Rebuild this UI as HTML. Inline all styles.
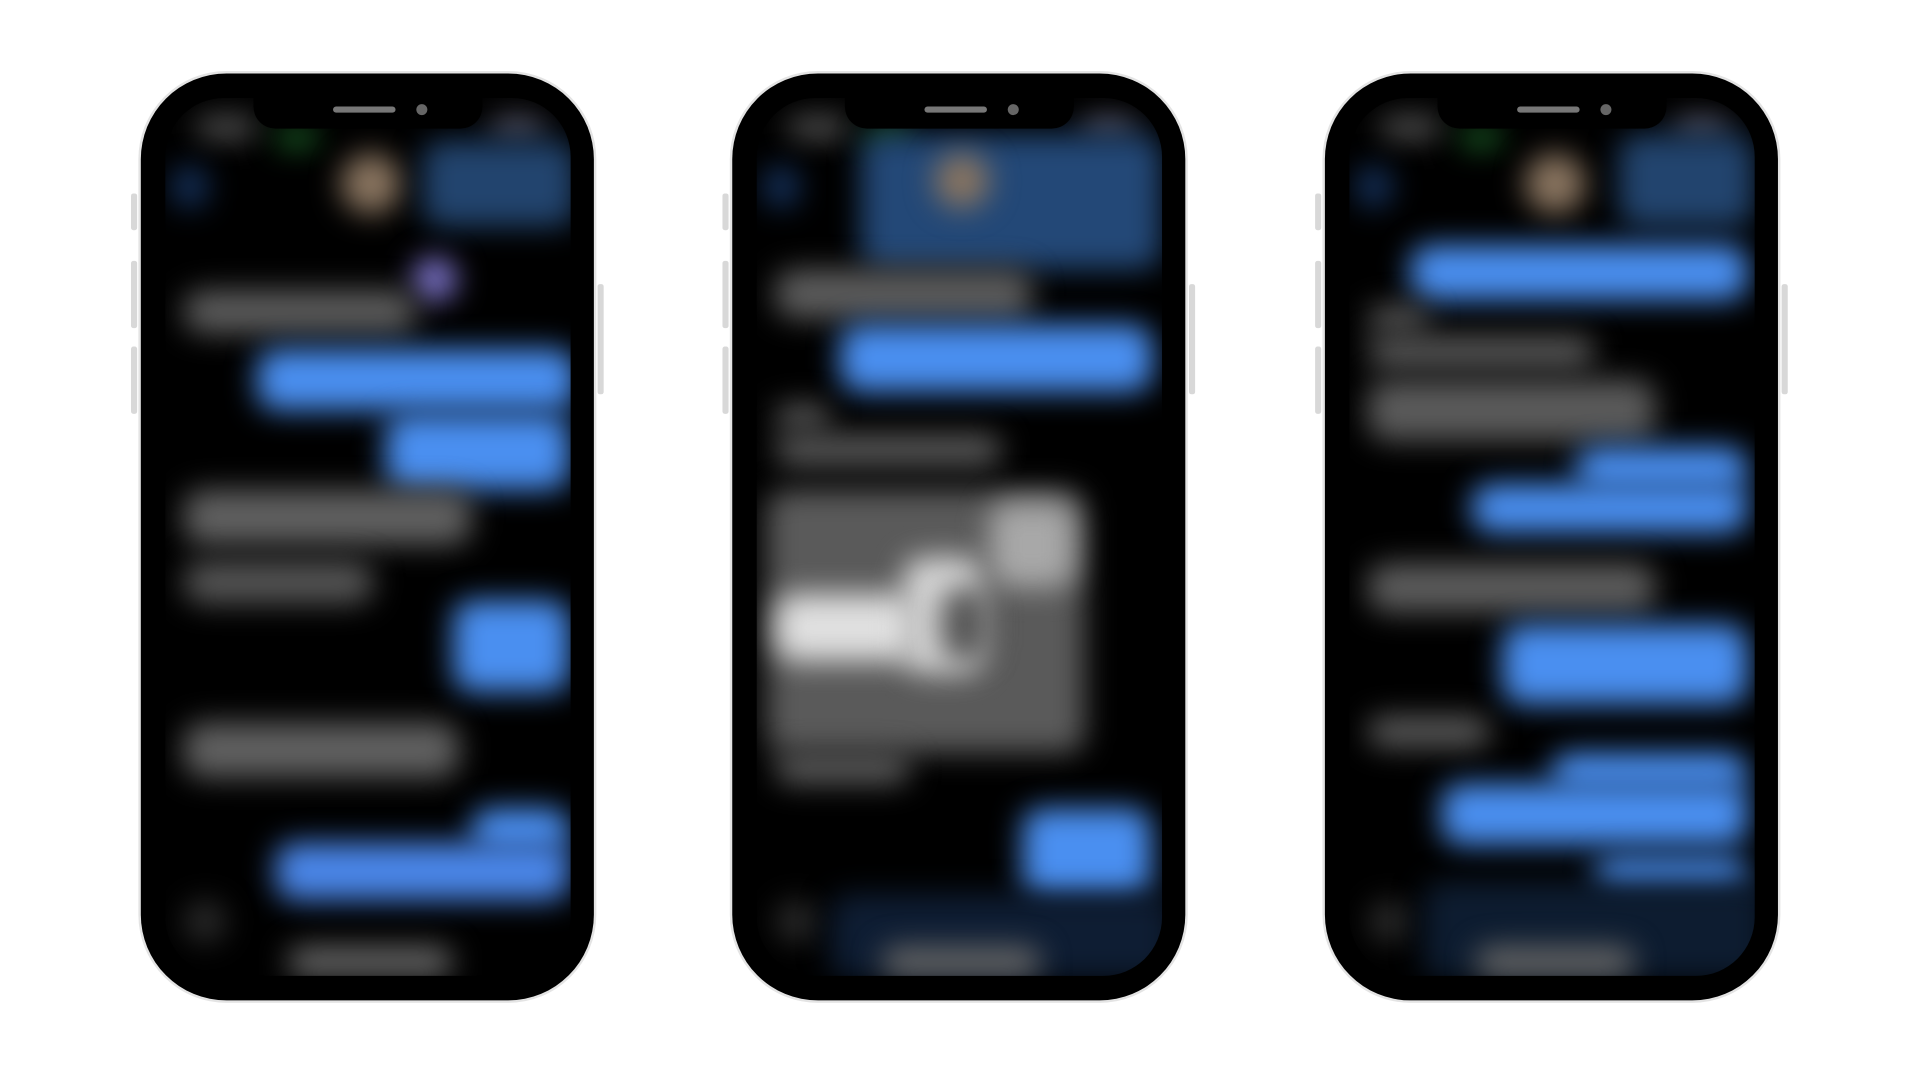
<!DOCTYPE html>
<html><head><meta charset="utf-8"><style>
html,body{margin:0;padding:0;background:#fff;width:1920px;height:1080px;overflow:hidden}
#s{position:absolute;left:0;top:0;width:1568px;height:882px;transform:scale(1.22449);transform-origin:0 0}
.ph{position:absolute;top:60px;width:370px;height:757px;border-radius:70px;background:#000;box-shadow:0 0 0 2px #e4e4e4}
.scr{position:absolute;left:20px;top:20px;width:331px;height:717px;border-radius:48px;background:#000;overflow:hidden}
.b{position:absolute;filter:blur(12px);border-radius:16px}
.notch{position:absolute;left:92px;top:20px;width:187px;height:25px;background:#000;border-radius:0 0 18px 18px}
.spk{position:absolute;left:65px;top:7px;width:51px;height:5px;border-radius:3px;background:#777}
.cam{position:absolute;left:133px;top:5px;width:9px;height:9px;border-radius:50%;background:#666}
.btn{position:absolute;background:#d8d8d8;border-radius:2px;width:5px}
.g{background:#5c5c5c}.bl{background:#4a8ff0}.hd{background:#22446e}
</style></head><body><div id="s">

<!-- phone 1 -->
<div class="ph" style="left:115px">
<div class="btn" style="left:-8px;top:98px;height:30px"></div>
<div class="btn" style="left:-8px;top:153px;height:55px"></div>
<div class="btn" style="left:-8px;top:223px;height:55px"></div>
<div class="btn" style="left:373px;top:172px;height:90px"></div>
<div class="scr">
<div class="b g" style="left:25px;top:15px;width:50px;height:18px;background:#555"></div>
<div class="b" style="left:90px;top:25px;width:35px;height:15px;background:#1d6a2a"></div>
<div class="b" style="left:265px;top:15px;width:45px;height:18px;background:#556"></div>
<div class="b" style="left:5px;top:55px;width:30px;height:35px;background:#14305a"></div>
<div class="b" style="left:143px;top:45px;width:50px;height:50px;border-radius:50%;background:#8a7560"></div>
<div class="b hd" style="left:210px;top:35px;width:125px;height:70px"></div>
<div class="b" style="left:202px;top:130px;width:36px;height:36px;border-radius:50%;background:#8077d0"></div>
<div class="b g" style="left:15px;top:157px;width:190px;height:35px"></div>
<div class="b bl" style="left:75px;top:205px;width:260px;height:50px"></div>
<div class="b bl" style="left:180px;top:258px;width:150px;height:62px"></div>
<div class="b g" style="left:15px;top:320px;width:235px;height:45px;background:#606060"></div>
<div class="b g" style="left:15px;top:378px;width:155px;height:35px;background:#555"></div>
<div class="b bl" style="left:235px;top:410px;width:95px;height:75px"></div>
<div class="b g" style="left:15px;top:510px;width:225px;height:45px;background:#606060"></div>
<div class="b bl" style="left:250px;top:580px;width:80px;height:35px"></div>
<div class="b bl" style="left:90px;top:608px;width:240px;height:47px;background:#4a86e8"></div>
<div class="b" style="left:15px;top:655px;width:35px;height:35px;border-radius:50%;background:#2a2a2a"></div>
<div class="b g" style="left:100px;top:693px;width:135px;height:25px;background:#666"></div>
</div>
<div class="notch"><div class="spk"></div><div class="cam"></div></div>
</div>

<!-- phone 2 -->
<div class="ph" style="left:598px">
<div class="btn" style="left:-8px;top:98px;height:30px"></div>
<div class="btn" style="left:-8px;top:153px;height:55px"></div>
<div class="btn" style="left:-8px;top:223px;height:55px"></div>
<div class="btn" style="left:373px;top:172px;height:90px"></div>
<div class="scr">
<div class="b g" style="left:25px;top:15px;width:50px;height:18px;background:#555"></div>
<div class="b" style="left:90px;top:25px;width:35px;height:15px;background:#1d6a2a"></div>
<div class="b" style="left:265px;top:15px;width:45px;height:18px;background:#556"></div>
<div class="b" style="left:5px;top:55px;width:30px;height:35px;background:#14305a"></div>
<div class="b hd" style="left:85px;top:30px;width:245px;height:110px;background:#234877"></div>
<div class="b" style="left:145px;top:45px;width:45px;height:45px;border-radius:50%;background:#8a7560"></div>
<div class="b g" style="left:15px;top:140px;width:210px;height:40px"></div>
<div class="b bl" style="left:68px;top:185px;width:255px;height:55px"></div>
<div class="b g" style="left:15px;top:250px;width:45px;height:20px"></div>
<div class="b g" style="left:15px;top:275px;width:185px;height:25px"></div>
<div class="b" style="left:8px;top:320px;width:260px;height:215px;background:#5a5a5a"></div>
<div class="b" style="left:15px;top:405px;width:115px;height:55px;background:#e0e0e0"></div>
<div class="b" style="left:120px;top:375px;width:65px;height:95px;background:#d8d8d8"></div>
<div class="b" style="left:190px;top:330px;width:70px;height:70px;background:#a8a8a8"></div>
<div class="b" style="left:150px;top:400px;width:40px;height:60px;background:#555"></div>
<div class="b g" style="left:15px;top:535px;width:110px;height:25px"></div>
<div class="b bl" style="left:217px;top:580px;width:105px;height:75px"></div>
<div class="b" style="left:15px;top:655px;width:35px;height:35px;border-radius:50%;background:#2a2a2a"></div>
<div class="b" style="left:60px;top:650px;width:280px;height:70px;background:#0e1d33"></div>
<div class="b g" style="left:102px;top:693px;width:130px;height:25px;background:#666"></div>
</div>
<div class="notch"><div class="spk"></div><div class="cam"></div></div>
</div>

<!-- phone 3 -->
<div class="ph" style="left:1082px">
<div class="btn" style="left:-8px;top:98px;height:30px"></div>
<div class="btn" style="left:-8px;top:153px;height:55px"></div>
<div class="btn" style="left:-8px;top:223px;height:55px"></div>
<div class="btn" style="left:373px;top:172px;height:90px"></div>
<div class="scr">
<div class="b g" style="left:25px;top:15px;width:50px;height:18px;background:#555"></div>
<div class="b" style="left:90px;top:25px;width:35px;height:15px;background:#1d6a2a"></div>
<div class="b" style="left:265px;top:15px;width:45px;height:18px;background:#556"></div>
<div class="b" style="left:5px;top:55px;width:30px;height:35px;background:#14305a"></div>
<div class="b" style="left:143px;top:45px;width:50px;height:50px;border-radius:50%;background:#8a7560"></div>
<div class="b hd" style="left:220px;top:30px;width:110px;height:75px"></div>
<div class="b bl" style="left:50px;top:120px;width:275px;height:45px"></div>
<div class="b g" style="left:15px;top:170px;width:50px;height:20px"></div>
<div class="b g" style="left:15px;top:195px;width:185px;height:25px"></div>
<div class="b g" style="left:15px;top:230px;width:235px;height:50px;background:#5a5a5a"></div>
<div class="b bl" style="left:185px;top:285px;width:140px;height:35px"></div>
<div class="b bl" style="left:100px;top:315px;width:225px;height:40px"></div>
<div class="b g" style="left:15px;top:380px;width:235px;height:40px"></div>
<div class="b bl" style="left:125px;top:430px;width:200px;height:65px"></div>
<div class="b g" style="left:15px;top:505px;width:100px;height:25px"></div>
<div class="b bl" style="left:165px;top:535px;width:160px;height:30px"></div>
<div class="b bl" style="left:75px;top:560px;width:250px;height:50px"></div>
<div class="b bl" style="left:200px;top:620px;width:125px;height:30px"></div>
<div class="b" style="left:15px;top:655px;width:35px;height:35px;border-radius:50%;background:#2a2a2a"></div>
<div class="b" style="left:60px;top:640px;width:280px;height:80px;background:#0d1c30"></div>
<div class="b g" style="left:103px;top:693px;width:130px;height:25px;background:#666"></div>
</div>
<div class="notch"><div class="spk"></div><div class="cam"></div></div>
</div>

</div></body></html>
